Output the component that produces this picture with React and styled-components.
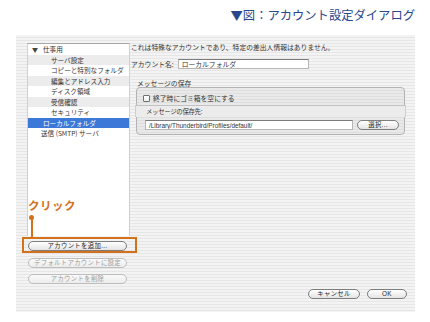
import React from "react";
import styled, { createGlobalStyle, css } from "styled-components";

const Global = createGlobalStyle`
  html, body { margin: 0; padding: 0; background: #ffffff; }
  body { width: 430px; height: 322px; overflow: hidden;
    font-family: "Liberation Sans", "Noto Sans CJK JP", sans-serif; }
`;

const pinstripe = css`
  background: repeating-linear-gradient(
    to bottom,
    #f3f3f3 0px,
    #f3f3f3 2px,
    #e6e6e6 2px,
    #e6e6e6 3px
  );
`;

const Page = styled.div`
  width: 430px;
  height: 322px;
  display: flex;
  flex-direction: column;
`;

const Header = styled.div`
  height: 35px;
  box-sizing: border-box;
  padding: 9px 15px 0 0;
  display: flex;
  justify-content: flex-end;
`;

const Title = styled.h1`
  margin: 0;
  font-family: "Noto Sans CJK JP", sans-serif;
  font-weight: 400;
  font-size: 12.3px;
  line-height: 12px;
  color: #27468c;
  white-space: nowrap;
`;

const Dialog = styled.div`
  ${pinstripe};
  margin-left: 16px;
  width: 399px;
  height: 277px;
  box-sizing: border-box;
  display: flex;
  padding-left: 11px;
  font-family: "Noto Sans CJK JP", sans-serif;
  color: #333;
`;

const LeftCol = styled.div`
  width: 103px;
  display: flex;
  flex-direction: column;
  padding-top: 8px;
`;

const ListBox = styled.div`
  height: 193px;
  box-sizing: border-box;
  background: #fff;
  border-top: 1px solid #a8a8a8;
  border-left: 1px solid #d0d0d0;
  border-right: 1px solid #d0d0d0;
  display: flex;
  flex-direction: column;
`;

const Row = styled.div`
  height: 10.5px;
  display: flex;
  align-items: center;
  box-sizing: border-box;
  padding-left: ${(p) => p.$indent}px;
  font-size: 6.6px;
  white-space: nowrap;
  background: ${(p) => (p.$selected ? "#3b78d8" : p.$alt ? "#ececec" : "#fff")};
  color: ${(p) => (p.$selected ? "#fff" : "#333")};
`;

const Arrow = styled.span`
  font-size: 6px;
  margin-right: 5px;
  color: #444;
`;

const ButtonStack = styled.div`
  display: flex;
  flex-direction: column;
  gap: 6.5px;
  margin-top: 5px;
  padding-left: 1px;
`;

const Pill = styled.button`
  height: 10px;
  width: ${(p) => p.$w}px;
  box-sizing: border-box;
  padding: 0;
  border-radius: 5px;
  border: 1px solid ${(p) => (p.$disabled ? "#bdbdbd" : "#7d7d7d")};
  background: ${(p) =>
    p.$disabled
      ? "linear-gradient(#fafafa, #ececec)"
      : "linear-gradient(#ffffff, #e4e4e4)"};
  font-family: "Liberation Sans", "Noto Sans CJK JP", sans-serif;
  font-size: 6.4px;
  line-height: 8px;
  color: ${(p) => (p.$disabled ? "#9a9a9a" : "#222")};
  letter-spacing: 0.3px;
  display: flex;
  align-items: center;
  justify-content: center;
`;

const Callout = styled.div`
  position: relative;
  display: flex;
`;

const Frame = styled.div`
  position: absolute;
  top: -4px;
  bottom: -2px;
  left: -6px;
  right: -7px;
  border: 2px solid #d4711d;
  pointer-events: none;
`;

const CalloutLabel = styled.div`
  position: absolute;
  left: 0px;
  top: -42px;
  font-family: "Noto Sans CJK JP", sans-serif;
  font-weight: 700;
  font-size: 11.5px;
  line-height: 12px;
  letter-spacing: 0.5px;
  color: #d4711d;
  white-space: nowrap;
`;

const CalloutDot = styled.div`
  position: absolute;
  left: 1px;
  top: -26px;
  width: 5px;
  height: 5px;
  border-radius: 50%;
  background: #d4711d;
`;

const CalloutLine = styled.div`
  position: absolute;
  left: 2.5px;
  top: -24px;
  width: 2px;
  height: 20px;
  background: #d4711d;
`;

const RightCol = styled.div`
  flex: 1;
  margin-left: 1px;
  padding: 7px 8px 13px 0;
  display: flex;
  flex-direction: column;
  font-size: 6.8px;
`;

const Info = styled.div`
  line-height: 10px;
  white-space: nowrap;
`;

const FieldRow = styled.div`
  margin-top: 7px;
  display: flex;
  align-items: center;
  gap: 4px;
  white-space: nowrap;
`;

const TextField = styled.div`
  width: ${(p) => p.$w}px;
  height: 10px;
  box-sizing: border-box;
  background: #fff;
  border: 1px solid #b5b5b5;
  border-top-color: #7c7c7c;
  padding-left: 3px;
  display: flex;
  align-items: center;
  font-family: ${(p) => (p.$latin ? '"Liberation Sans", sans-serif' : '"Noto Sans CJK JP", sans-serif')};
  font-size: ${(p) => (p.$latin ? "6.4px" : "6.8px")};
  color: #333;
  white-space: nowrap;
  overflow: hidden;
`;

const SectionLabel = styled.div`
  margin-top: 10px;
  margin-left: 6px;
  line-height: 8px;
  white-space: nowrap;
`;

const GroupBox = styled.div`
  margin: 0 2px 0 5px;
  height: 48px;
  box-sizing: border-box;
  border: 1px solid #b3b3b3;
  border-radius: 4px;
  background: repeating-linear-gradient(
    to bottom,
    #e9e9e9 0px,
    #e9e9e9 2px,
    #dedede 2px,
    #dedede 3px
  );
  display: flex;
  flex-direction: column;
`;

const CheckRow = styled.label`
  display: flex;
  align-items: center;
  gap: 3px;
  height: 10px;
  margin: 5px 0 0 6px;
  white-space: nowrap;
`;

const Box = styled.span`
  width: 7px;
  height: 7px;
  box-sizing: border-box;
  border: 1px solid #6f6f6f;
  border-radius: 1px;
  background: linear-gradient(#fff, #eee);
`;

const Band = styled.div`
  margin: 2px -2px 0 -2px;
  height: 12px;
  box-sizing: border-box;
  border-top: 1px solid #c2c2c2;
  border-left: 1px solid #cfcfcf;
  border-right: 1px solid #cfcfcf;
  background: #ececec;
  display: flex;
  align-items: center;
  padding-left: 10px;
  font-size: 6.4px;
  white-space: nowrap;
  letter-spacing: -0.3px;
`;

const PathRow = styled.div`
  margin: 3px 0 0 8px;
  display: flex;
  align-items: center;
  gap: 4px;
`;

const Footer = styled.div`
  margin-top: auto;
  display: flex;
  justify-content: flex-end;
  gap: 7px;
`;

const tree = [
  { label: "仕事用", indent: 4, top: true },
  { label: "サーバ設定", indent: 23, alt: true },
  { label: "コピーと特別なフォルダ", indent: 23 },
  { label: "編集とアドレス入力", indent: 23, alt: true },
  { label: "ディスク領域", indent: 23 },
  { label: "受信確認", indent: 23, alt: true },
  { label: "セキュリティ", indent: 23 },
  { label: "ローカルフォルダ", indent: 15, selected: true },
  { label: "送信 (SMTP) サーバ", indent: 13 },
];

export default function App() {
  return (
    <Page>
      <Global />
      <Header>
        <Title>▼図：アカウント設定ダイアログ</Title>
      </Header>
      <Dialog>
        <LeftCol>
          <ListBox>
            {tree.map((r) => (
              <Row key={r.label} $indent={r.indent} $alt={r.alt} $selected={r.selected}>
                {r.top && <Arrow>▼</Arrow>}
                {r.label}
              </Row>
            ))}
          </ListBox>
          <ButtonStack>
            <Callout>
              <CalloutLabel>クリック</CalloutLabel>
              <CalloutDot />
              <CalloutLine />
              <Pill $w={99}>アカウントを追加...</Pill>
              <Frame />
            </Callout>
            <Pill $w={99} $disabled>デフォルトアカウントに設定</Pill>
            <Pill $w={99} $disabled>アカウントを削除</Pill>
          </ButtonStack>
        </LeftCol>
        <RightCol>
          <Info>これは特殊なアカウントであり、特定の差出人情報はありません。</Info>
          <FieldRow>
            アカウント名:
            <TextField $w={131}>ローカルフォルダ</TextField>
          </FieldRow>
          <SectionLabel>メッセージの保存</SectionLabel>
          <GroupBox>
            <CheckRow>
              <Box />
              終了時にゴミ箱を空にする
            </CheckRow>
            <Band>メッセージの保存先:</Band>
            <PathRow>
              <TextField $w={208} $latin>/Library/Thunderbird/Profiles/default/</TextField>
              <Pill $w={42}>選択...</Pill>
            </PathRow>
          </GroupBox>
          <Footer>
            <Pill $w={52}>キャンセル</Pill>
            <Pill $w={40}>OK</Pill>
          </Footer>
        </RightCol>
      </Dialog>
    </Page>
  );
}
